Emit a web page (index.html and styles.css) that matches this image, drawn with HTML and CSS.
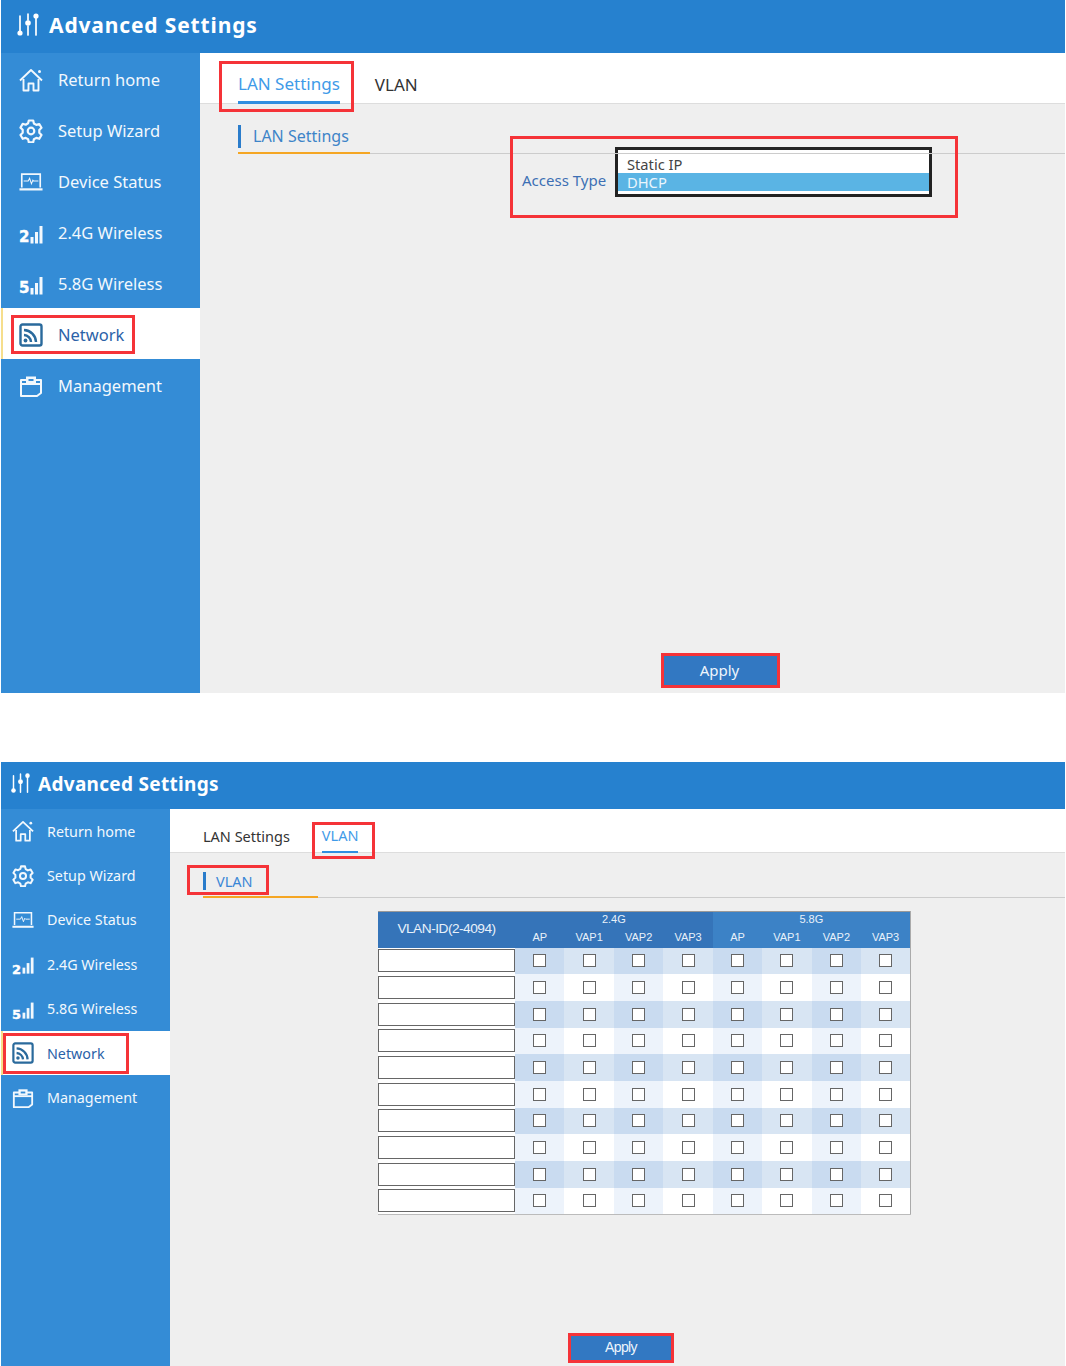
FILE: index.html
```html
<!DOCTYPE html>
<html lang="en">
<head>
    <meta charset="UTF-8">
    <meta name="viewport" content="width=device-width, initial-scale=1.0">
    <title>Advanced Settings</title>
    <link rel="stylesheet" href="styles.css">
</head>
<body>
    <!-- icon sprite, used by both screens -->
    <svg class="sprite" xmlns="http://www.w3.org/2000/svg">
        <symbol id="i-sliders" viewBox="0 0 24 24">
            <g fill="none" stroke="currentColor" stroke-width="1.7" stroke-linecap="round">
                <path d="M4 3v15M12 1v6M12 13v9M20 5v17"/>
            </g>
            <circle cx="4" cy="20" r="2.6" fill="currentColor"/>
            <circle cx="12" cy="10" r="2.8" fill="currentColor"/>
            <circle cx="20" cy="3" r="2.6" fill="currentColor"/>
        </symbol>
        <symbol id="i-home" viewBox="0 0 24 24">
            <g fill="none" stroke="currentColor" stroke-width="1.9" stroke-linejoin="round">
                <path d="M1 12.500 12 2l11 10.500"/>
                <path d="M4.500 11v11.500h5v-7h5v7h5V11"/>
            </g>
            <circle cx="20.500" cy="3.500" r="1.500" fill="currentColor"/>
        </symbol>
        <symbol id="i-gear" viewBox="0 0 24 24">
            <g fill="none" stroke="currentColor" stroke-width="2.200" stroke-linejoin="round">
                <path d="M9.800 1.500h4.400l.7 3 2.400 1.400 3-.9 2.200 3.800-2.200 2.200v2.800l2.200 2.200-2.200 3.800-3-.9-2.400 1.400-.7 3H9.800l-.7-3-2.400-1.400-3 .9-2.200-3.800 2.200-2.200V10.800L1.500 8.600 3.700 4.800l3 .9 2.400-1.400z"/>
                <circle cx="12" cy="12" r="3.300"/>
            </g>
        </symbol>
        <symbol id="i-laptop" viewBox="0 0 26 24">
            <g fill="none" stroke="currentColor">
                <path stroke-width="1.800" d="M3 18V3.500h20V18"/>
                <path stroke-width="2.400" d="M0.500 20h25"/>
                <path stroke-width="1.100" d="M5 11h5l1.500-3 2 6 1.500-4 1 1h5"/>
            </g>
        </symbol>
        <symbol id="i-signal" viewBox="0 0 24 24">
            <g fill="currentColor">
                <rect x="11.500" y="16" width="3" height="6.500"/>
                <rect x="16" y="11" width="3" height="11.500"/>
                <rect x="20.500" y="5" width="3" height="17.500"/>
            </g>
        </symbol>
        <symbol id="i-rss" viewBox="0 0 24 24">
            <rect x="1.500" y="1.500" width="21" height="21" rx="2" fill="none" stroke="#2a6a9c" stroke-width="2.400"/>
            <g fill="none" stroke="#2a6a9c" stroke-width="2.500">
                <path d="M5 7a12.500 12.500 0 0 1 12 12"/>
                <path d="M5 12a7.500 7.500 0 0 1 7 7"/>
            </g>
            <circle cx="6.500" cy="17.500" r="1.900" fill="#2a6a9c"/>
        </symbol>
        <symbol id="i-case" viewBox="0 0 24 24">
            <g fill="none" stroke="currentColor" stroke-width="2" stroke-linejoin="round">
                <path d="M2 6v16h16l4-3V6z"/>
                <path d="M2 10h20"/>
            </g>
            <path d="M7 2.500h10V9H7z" fill="currentColor"/>
            <path d="M9.500 5h5v2h-5z" fill="#348cd6"/>
        </symbol>
    </svg>

    <!-- LAN settings -->
    <section class="screen screen-lan">
        <header class="top-bar">
            <svg class="top-icon"><use href="#i-sliders"/></svg>
            <h1>Advanced Settings</h1>
        </header>
        <div class="screen-body">
            <nav class="side-nav">
                <a class="nav-item"><svg class="nav-icon"><use href="#i-home"/></svg>Return home</a>
                <a class="nav-item"><svg class="nav-icon"><use href="#i-gear"/></svg>Setup Wizard</a>
                <a class="nav-item"><svg class="nav-icon"><use href="#i-laptop"/></svg>Device Status</a>
                <a class="nav-item"><span class="signal-num">2</span><svg class="nav-icon"><use href="#i-signal"/></svg>2.4G Wireless</a>
                <a class="nav-item"><span class="signal-num">5</span><svg class="nav-icon"><use href="#i-signal"/></svg>5.8G Wireless</a>
                <a class="nav-item active"><svg class="nav-icon"><use href="#i-rss"/></svg>Network</a>
                <a class="nav-item"><svg class="nav-icon"><use href="#i-case"/></svg>Management</a>
            </nav>
            <main class="content">
                <div class="tabs">
                    <a class="tab active">LAN Settings</a>
                    <a class="tab">VLAN</a>
                </div>
                <h2 class="section-title">LAN Settings</h2>
                <div class="form-row">
                    <label class="form-label">Access Type</label>
                    <div class="list-select">
                        <div class="list-option">Static IP</div>
                        <div class="list-option selected">DHCP</div>
                    </div>
                </div>
                <div class="actions">
                    <button class="apply-btn">Apply</button>
                </div>
            </main>
        </div>
        <div class="mark mark-lan-tab"></div>
        <div class="mark mark-lan-nav"></div>
        <div class="mark mark-lan-form"></div>
        <div class="mark mark-lan-apply"></div>
    </section>

    <!-- VLAN -->
    <section class="screen screen-vlan">
        <header class="top-bar">
            <svg class="top-icon"><use href="#i-sliders"/></svg>
            <h1>Advanced Settings</h1>
        </header>
        <div class="screen-body">
            <nav class="side-nav">
                <a class="nav-item"><svg class="nav-icon"><use href="#i-home"/></svg>Return home</a>
                <a class="nav-item"><svg class="nav-icon"><use href="#i-gear"/></svg>Setup Wizard</a>
                <a class="nav-item"><svg class="nav-icon"><use href="#i-laptop"/></svg>Device Status</a>
                <a class="nav-item"><span class="signal-num">2</span><svg class="nav-icon"><use href="#i-signal"/></svg>2.4G Wireless</a>
                <a class="nav-item"><span class="signal-num">5</span><svg class="nav-icon"><use href="#i-signal"/></svg>5.8G Wireless</a>
                <a class="nav-item active"><svg class="nav-icon"><use href="#i-rss"/></svg>Network</a>
                <a class="nav-item"><svg class="nav-icon"><use href="#i-case"/></svg>Management</a>
            </nav>
            <main class="content">
                <div class="tabs">
                    <a class="tab">LAN Settings</a>
                    <a class="tab active">VLAN</a>
                </div>
                <h2 class="section-title">VLAN</h2>
                <table class="vlan-table">
                    <thead>
                        <tr>
                            <th class="id-col" rowspan="2">VLAN-ID(2-4094)</th>
                            <th colspan="4">2.4G</th>
                            <th class="band-b" colspan="4">5.8G</th>
                        </tr>
                        <tr>
                            <th>AP</th><th>VAP1</th><th>VAP2</th><th>VAP3</th>
                            <th class="band-b">AP</th><th class="band-b">VAP1</th><th class="band-b">VAP2</th><th class="band-b">VAP3</th>
                        </tr>
                    </thead>
                    <tbody>
                        <tr><td class="id-col"><input class="id-input"></td><td><input type="checkbox"></td><td><input type="checkbox"></td><td><input type="checkbox"></td><td><input type="checkbox"></td><td><input type="checkbox"></td><td><input type="checkbox"></td><td><input type="checkbox"></td><td><input type="checkbox"></td></tr>
                        <tr><td class="id-col"><input class="id-input"></td><td><input type="checkbox"></td><td><input type="checkbox"></td><td><input type="checkbox"></td><td><input type="checkbox"></td><td><input type="checkbox"></td><td><input type="checkbox"></td><td><input type="checkbox"></td><td><input type="checkbox"></td></tr>
                        <tr><td class="id-col"><input class="id-input"></td><td><input type="checkbox"></td><td><input type="checkbox"></td><td><input type="checkbox"></td><td><input type="checkbox"></td><td><input type="checkbox"></td><td><input type="checkbox"></td><td><input type="checkbox"></td><td><input type="checkbox"></td></tr>
                        <tr><td class="id-col"><input class="id-input"></td><td><input type="checkbox"></td><td><input type="checkbox"></td><td><input type="checkbox"></td><td><input type="checkbox"></td><td><input type="checkbox"></td><td><input type="checkbox"></td><td><input type="checkbox"></td><td><input type="checkbox"></td></tr>
                        <tr><td class="id-col"><input class="id-input"></td><td><input type="checkbox"></td><td><input type="checkbox"></td><td><input type="checkbox"></td><td><input type="checkbox"></td><td><input type="checkbox"></td><td><input type="checkbox"></td><td><input type="checkbox"></td><td><input type="checkbox"></td></tr>
                        <tr><td class="id-col"><input class="id-input"></td><td><input type="checkbox"></td><td><input type="checkbox"></td><td><input type="checkbox"></td><td><input type="checkbox"></td><td><input type="checkbox"></td><td><input type="checkbox"></td><td><input type="checkbox"></td><td><input type="checkbox"></td></tr>
                        <tr><td class="id-col"><input class="id-input"></td><td><input type="checkbox"></td><td><input type="checkbox"></td><td><input type="checkbox"></td><td><input type="checkbox"></td><td><input type="checkbox"></td><td><input type="checkbox"></td><td><input type="checkbox"></td><td><input type="checkbox"></td></tr>
                        <tr><td class="id-col"><input class="id-input"></td><td><input type="checkbox"></td><td><input type="checkbox"></td><td><input type="checkbox"></td><td><input type="checkbox"></td><td><input type="checkbox"></td><td><input type="checkbox"></td><td><input type="checkbox"></td><td><input type="checkbox"></td></tr>
                        <tr><td class="id-col"><input class="id-input"></td><td><input type="checkbox"></td><td><input type="checkbox"></td><td><input type="checkbox"></td><td><input type="checkbox"></td><td><input type="checkbox"></td><td><input type="checkbox"></td><td><input type="checkbox"></td><td><input type="checkbox"></td></tr>
                        <tr><td class="id-col"><input class="id-input"></td><td><input type="checkbox"></td><td><input type="checkbox"></td><td><input type="checkbox"></td><td><input type="checkbox"></td><td><input type="checkbox"></td><td><input type="checkbox"></td><td><input type="checkbox"></td><td><input type="checkbox"></td></tr>
                    </tbody>
                </table>
                <div class="actions">
                    <button class="apply-btn">Apply</button>
                </div>
            </main>
        </div>
        <div class="mark mark-vlan-tab"></div>
        <div class="mark mark-vlan-title"></div>
        <div class="mark mark-vlan-nav"></div>
        <div class="mark mark-vlan-apply"></div>
    </section>
</body>
</html>
```

FILE: styles.css
```css
* {
    box-sizing: border-box;
}
html, body {
    height: 1366px;
    overflow: hidden;
}
body {
    margin: 0;
    background-color: #fff;
    font-family: "Noto Sans", "Open Sans", sans-serif;
}
.sprite {
    display: none;
}

/* screen frames */
.screen {
    position: relative;
    display: flex;
    flex-direction: column;
    width: 1064px;
    margin-left: 1px;
}
.screen-lan {
    height: 693px;
    margin-bottom: 69px;
}
.screen-vlan {
    height: 604px;
}
.screen-body {
    display: flex;
    flex: 1;
    min-height: 0;
}

/* top bar */
.top-bar {
    display: flex;
    align-items: center;
    background-color: #2681cf;
    color: #fff;
}
.top-bar h1 {
    margin: 0;
    font-weight: 700;
}
.screen-lan .top-bar {
    height: 53px;
    padding: 0 0 4px 15px;
}
.screen-lan .top-bar h1 {
    margin-left: 9px;
    font-size: 21px;
    letter-spacing: 0.85px;
}
.screen-lan .top-icon {
    width: 24px;
    height: 24px;
}
.screen-vlan .top-bar {
    height: 47px;
    padding: 0 0 4px 9px;
}
.screen-vlan .top-bar h1 {
    margin-left: 7px;
    font-size: 19px;
    letter-spacing: 0.3px;
}
.screen-vlan .top-icon {
    width: 21px;
    height: 21px;
}

/* side nav */
.side-nav {
    display: flex;
    flex-direction: column;
    flex-shrink: 0;
    background-color: #348cd6;
}
.nav-item {
    position: relative;
    display: flex;
    align-items: center;
    color: #f2f8fd;
}
.nav-item.active {
    background-color: #fff;
    color: #2b62a8;
    border-left: 2px solid #f6de8c;
}
.nav-icon {
    flex-shrink: 0;
}
.signal-num {
    position: absolute;
    font-family: "DejaVu Sans", sans-serif;
    font-weight: 700;
    color: #fff;
    -webkit-text-stroke: 0.4px #fff;
}
.screen-lan .side-nav {
    width: 199px;
}
.screen-lan .nav-item {
    height: 51px;
    padding: 2px 0 0 18px;
    font-size: 16.5px;
}
.screen-lan .nav-item.active {
    padding-left: 16px;
}
.screen-lan .nav-icon {
    width: 24px;
    height: 24px;
    margin-right: 15px;
}
.screen-lan .signal-num {
    left: 18px;
    top: 24px;
    font-size: 15px;
    line-height: 14px;
}
.screen-vlan .side-nav {
    width: 169px;
}
.screen-vlan .nav-item {
    height: 44.4px;
    padding-left: 11px;
    font-size: 14.3px;
}
.screen-vlan .nav-item.active {
    padding-left: 9px;
}
.screen-vlan .nav-icon {
    width: 22px;
    height: 22px;
    margin-right: 13px;
}
.screen-vlan .signal-num {
    left: 11px;
    top: 21px;
    font-size: 13px;
    line-height: 13px;
}

/* content */
.content {
    display: flex;
    flex-direction: column;
    flex: 1;
    min-width: 0;
    background-color: #efefef;
}
.tabs {
    display: flex;
    background-color: #fff;
    border-bottom: 1px solid #ddd;
}
.tab {
    display: flex;
    align-items: center;
    color: #333;
}
.tab.active {
    color: #3f9be8;
    border-bottom: 2px solid #2f8ee0;
}
.screen-lan .tabs {
    height: 51px;
    padding-left: 38px;
    gap: 35px;
    font-size: 17px;
}
.screen-lan .tab {
    padding-top: 12px;
    margin-bottom: -1px;
}
.screen-lan .tab.active {
    border-bottom-width: 3px;
}
.screen-vlan .tabs {
    height: 44px;
    padding-left: 33px;
    gap: 32px;
    font-size: 14.5px;
}
.screen-vlan .tab {
    padding-top: 10px;
    height: 44px;
}

/* section title with the short orange rule */
.section-title {
    position: relative;
    margin: 0;
    font-weight: 400;
    color: #3d84c8;
    border-bottom: 1px solid #ccc;
}
.section-title::before {
    content: "";
    position: absolute;
    left: 0;
    background-color: #2a7ccb;
}
.section-title::after {
    content: "";
    position: absolute;
    left: 0;
    bottom: -1px;
    height: 2px;
    background-color: #f5a623;
}
.screen-lan .section-title {
    margin: 21px 0 0 38px;
    height: 29px;
    padding-left: 15px;
    font-size: 16px;
    line-height: 22px;
}
.screen-lan .section-title::before {
    top: 0;
    width: 3px;
    height: 23px;
}
.screen-lan .section-title::after {
    width: 132px;
}
.screen-vlan .section-title {
    margin: 17px 0 0 33px;
    height: 28px;
    padding-left: 13px;
    font-size: 14.5px;
    line-height: 22px;
    color: #3a86d6;
}
.screen-vlan .section-title::before {
    top: 2px;
    width: 3px;
    height: 18px;
}
.screen-vlan .section-title::after {
    width: 115px;
}

/* access type form */
.form-row {
    display: flex;
    align-items: flex-start;
    margin: -7px 0 0 322px;
}
.form-label {
    width: 93px;
    margin-top: 23px;
    font-size: 15px;
    color: #3d6fb4;
}
.list-select {
    width: 317px;
    height: 50px;
    padding-top: 5px;
    background-color: #fff;
    border: 3px solid #222;
    font-size: 14.7px;
    line-height: 18px;
    color: #444;
}
.list-option {
    padding-left: 9px;
}
.list-option.selected {
    background-color: #5ab4e4;
    color: #eaf6fd;
}

/* apply */
.actions {
    display: flex;
    margin-top: auto;
}
.apply-btn {
    border: none;
    background-color: #3278c2;
    color: #eef5fc;
    font-family: "Noto Sans", sans-serif;
}
.screen-lan .actions {
    padding: 0 0 6px 461px;
}
.screen-lan .apply-btn {
    width: 117px;
    height: 33px;
    padding: 0 0 2px;
    font-size: 15px;
}
.screen-vlan .actions {
    padding: 0 0 3px 398px;
}
.screen-vlan .apply-btn {
    width: 106px;
    height: 30px;
    padding: 0 0 3px;
    font-family: "Liberation Sans", sans-serif;
    font-size: 14px;
    letter-spacing: -0.6px;
}

/* vlan table */
.vlan-table {
    width: 533px;
    margin: 13px 0 0 208px;
    table-layout: fixed;
    border-collapse: collapse;
    font-family: "Liberation Sans", sans-serif;
    border-top: 1px solid #999;
    border-right: 1px solid #aaa;
    border-bottom: 1px solid #bbb;
}
.vlan-table th {
    height: 18px;
    padding: 0 0 4px;
    background-color: #3574b9;
    color: #e8f1fa;
    font-size: 11px;
    font-weight: 400;
}
.vlan-table th.band-b {
    background-color: #3c82c6;
}
.vlan-table th.id-col {
    width: 137px;
    padding-bottom: 3px;
    font-size: 13.7px;
    letter-spacing: -0.5px;
}
.vlan-table td {
    height: 26.7px;
    padding: 0;
    text-align: center;
    background-color: #fff;
}
.vlan-table td:nth-child(even) {
    background-color: #edf3fb;
}
.vlan-table tbody tr:nth-child(odd) td {
    background-color: #d8e5f3;
}
.vlan-table tbody tr:nth-child(odd) td:nth-child(even) {
    background-color: #c9dbf0;
}
.vlan-table td.id-col,
.vlan-table tbody tr:nth-child(odd) td.id-col {
    background-color: #fff;
    vertical-align: middle;
}
.id-input {
    display: block;
    width: 137px;
    height: 23px;
    margin: 0;
    padding: 0;
    background-color: #fff;
    border: 1px solid #666;
    outline: none;
}
.vlan-table input[type="checkbox"] {
    display: block;
    appearance: none;
    width: 13px;
    height: 13px;
    margin: 0 auto;
    background-color: #fff;
    border: 1px solid #666;
}

/* red annotation boxes drawn over the screenshot */
.mark {
    position: absolute;
    border: 3px solid #f53338;
}
.mark-lan-tab { left: 218px; top: 61px; width: 135px; height: 51px; }
.mark-lan-nav { left: 10px; top: 315px; width: 124px; height: 39px; }
.mark-lan-form { left: 509px; top: 136px; width: 448px; height: 82px; }
.mark-lan-apply { left: 660px; top: 653px; width: 119px; height: 35px; }
.mark-vlan-tab { left: 311px; top: 60px; width: 63px; height: 37px; }
.mark-vlan-title { left: 186px; top: 103px; width: 82px; height: 30px; }
.mark-vlan-nav { left: 2px; top: 271px; width: 126px; height: 41px; }
.mark-vlan-apply { left: 567px; top: 571px; width: 106px; height: 30px; }
```
